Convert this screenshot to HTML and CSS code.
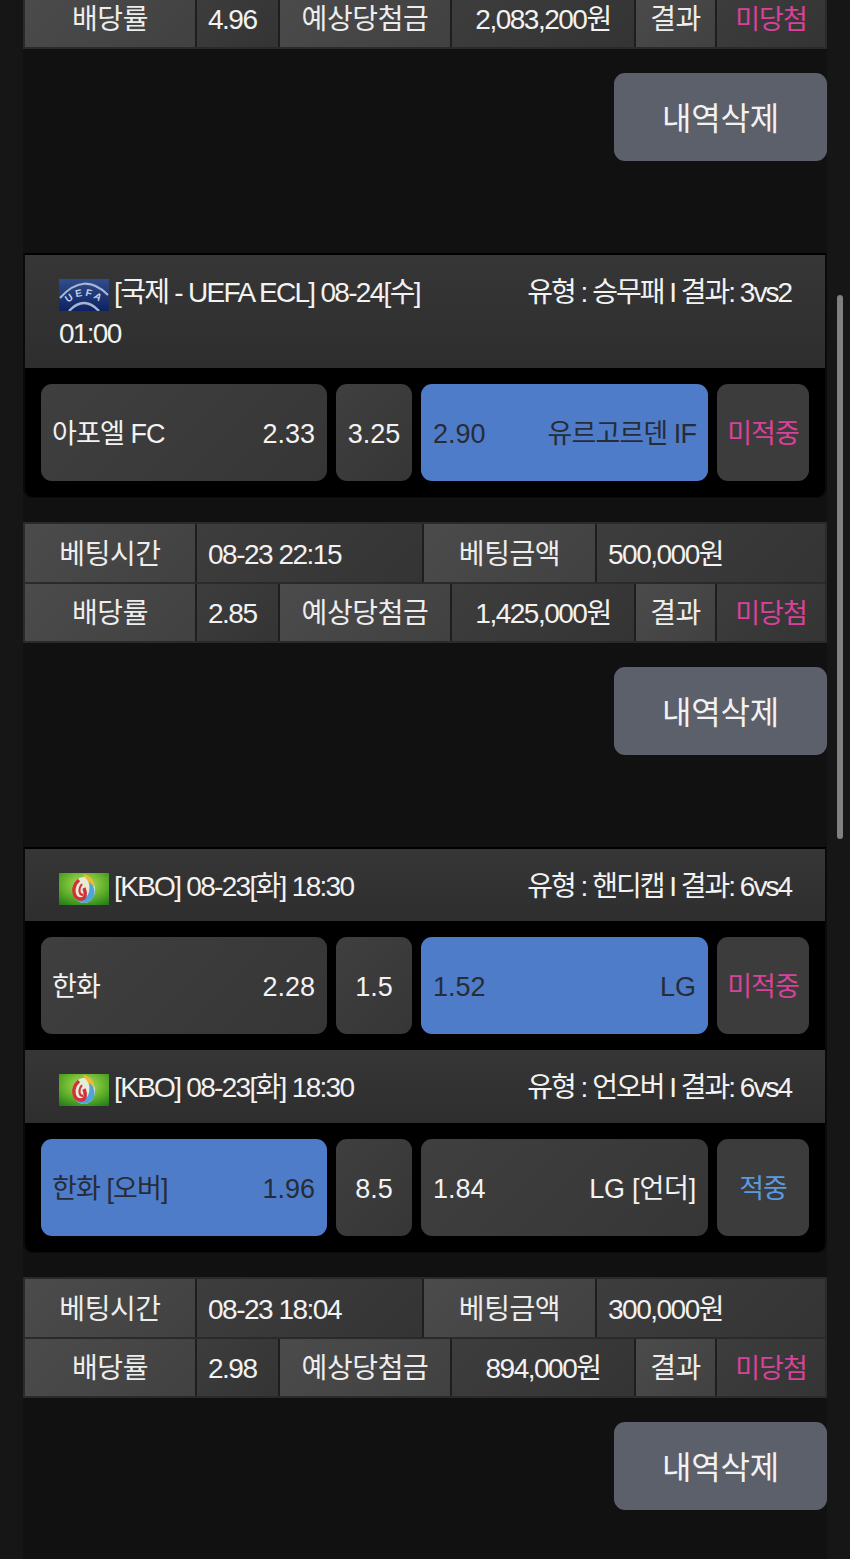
FILE: index.html
```html
<!DOCTYPE html>
<html lang="ko">
<head>
<meta charset="utf-8">
<title>베팅내역</title>
<link rel="stylesheet" href="styles.css">
</head>
<body>
<div class="page">
  <div class="bet-table first">
    <div class="tr">
      <div class="td lab c170">배당률</div><div class="td val c80">4.96</div><div class="td lab c170">예상당첨금</div><div class="td val cen c182">2,083,200원</div><div class="td lab c79">결과</div><div class="td val cen pink fill">미당첨</div>
    </div>
  </div>
  <div class="actions"><button class="del">내역삭제</button></div>

  <section class="card">
    <header class="head tall">
      <div class="league">
        <svg class="flag" viewBox="0 0 50 32"><defs><linearGradient id="u" x1="0" y1="0" x2="0" y2="1"><stop offset="0" stop-color="#2f4d8c"/><stop offset="1" stop-color="#0e2263"/></linearGradient></defs><rect width="50" height="32" fill="url(#u)"/><path d="M1 19Q25-8 49 16" fill="none" stroke="#a9b6cf" stroke-width="2.2"/><path d="M10 32Q25 16 40 32" fill="none" stroke="#a9b6cf" stroke-width="2.4"/><path id="ua" d="M4 29Q25 5 47 29" fill="none"/><text class="uefa"><textPath href="#ua" startOffset="7">UEFA</textPath></text></svg>
        [국제 - UEFA ECL] 08-24[수] 01:00
      </div>
      <div class="type">유형 : 승무패 I 결과: 3vs2</div>
    </header>
    <div class="match">
      <div class="pick wide"><span class="name">아포엘 FC</span><span>2.33</span></div>
      <div class="pick mid">3.25</div>
      <div class="pick wide on"><span>2.90</span><span class="name">유르고르덴 IF</span></div>
      <div class="pick res pink">미적중</div>
    </div>
  </section>
  <div class="bet-table">
    <div class="tr">
      <div class="td lab c170">베팅시간</div><div class="td val c225">08-23 22:15</div><div class="td lab c170b">베팅금액</div><div class="td val c229">500,000원</div>
    </div>
    <div class="tr">
      <div class="td lab c170">배당률</div><div class="td val c80">2.85</div><div class="td lab c170">예상당첨금</div><div class="td val cen c182">1,425,000원</div><div class="td lab c79">결과</div><div class="td val cen pink fill">미당첨</div>
    </div>
  </div>
  <div class="actions"><button class="del">내역삭제</button></div>

  <section class="card">
    <header class="head">
      <div class="league">
        <svg class="flag" viewBox="0 0 50 32"><use href="#kbo"/></svg>
        [KBO] 08-23[화] 18:30
      </div>
      <div class="type">유형 : 핸디캡 I 결과: 6vs4</div>
    </header>
    <div class="match">
      <div class="pick wide"><span class="name">한화</span><span>2.28</span></div>
      <div class="pick mid">1.5</div>
      <div class="pick wide on"><span>1.52</span><span>LG</span></div>
      <div class="pick res pink">미적중</div>
    </div>
    <header class="head">
      <div class="league">
        <svg class="flag" viewBox="0 0 50 32"><defs><radialGradient id="k" cx=".5" cy=".35" r=".8"><stop offset="0" stop-color="#b8e45e"/><stop offset=".55" stop-color="#62b02c"/><stop offset="1" stop-color="#1f7a18"/></radialGradient></defs><g id="kbo"><rect width="50" height="32" fill="url(#k)"/><ellipse cx="25" cy="17" rx="11" ry="13" fill="#e6ecd6"/><path d="M24 1C31 2 36 7 35 14L30 11C29 7 26 5 24 1Z" fill="#edb93c"/><path d="M30 9C38 14 38 28 26 30C22 30 19 29 17 26C27 28 32 22 30 9Z" fill="#4fa5da"/><path d="M20 7C12 14 14 26 22 26C27 26 27 20 25 15" fill="none" stroke="#d5303a" stroke-width="3.4"/><path d="M23 11C19 16 20 22 24 22" fill="none" stroke="#d5303a" stroke-width="2"/></g></svg>
        [KBO] 08-23[화] 18:30
      </div>
      <div class="type">유형 : 언오버 I 결과: 6vs4</div>
    </header>
    <div class="match">
      <div class="pick wide on"><span class="name">한화 [오버]</span><span>1.96</span></div>
      <div class="pick mid">8.5</div>
      <div class="pick wide"><span>1.84</span><span class="name loose">LG [언더]</span></div>
      <div class="pick res blue">적중</div>
    </div>
  </section>
  <div class="bet-table">
    <div class="tr">
      <div class="td lab c170">베팅시간</div><div class="td val c225">08-23 18:04</div><div class="td lab c170b">베팅금액</div><div class="td val c229">300,000원</div>
    </div>
    <div class="tr">
      <div class="td lab c170">배당률</div><div class="td val c80">2.98</div><div class="td lab c170">예상당첨금</div><div class="td val cen c182">894,000원</div><div class="td lab c79">결과</div><div class="td val cen pink fill">미당첨</div>
    </div>
  </div>
  <div class="actions"><button class="del">내역삭제</button></div>
</div>
<div class="scrollbar"></div>
</body>
</html>
```
FILE: styles.css
```css
* { box-sizing: border-box; }
html, body { margin: 0; height: 1559px; overflow: hidden; }
body {
  background: #161616;
  color: #f2f2f2;
  font-family: "Liberation Sans", "Noto Sans CJK KR", sans-serif;
  font-size: 28px;
  font-weight: 400;
}
.page {
  width: 804px;
  margin: -11px 0 0 23px;
  background: #111;
  min-height: 1570px;
}
.bet-table {
  background: #2a2a2a;
  padding: 2px;
  display: flex;
  flex-direction: column;
  gap: 2px;
  height: 121px;
}
.bet-table.first { height: 60px; padding-top: 0; }
.tr { flex: 1; display: flex; gap: 2px; background: #1e1e1e; }
.td {
  display: flex;
  align-items: center;
  padding: 4px 0 0 11px;
  line-height: 32px;
  letter-spacing: -1.5px;
  white-space: nowrap;
}
.lab {
  justify-content: center;
  padding-left: 0;
  letter-spacing: -.4px;
  background: linear-gradient(135deg, #4b4b4b, #414141);
  color: #ededed;
}
.val { background: linear-gradient(135deg, #3d3d3d, #343434); }
.cen { justify-content: center; padding-left: 0; }
.c170 { width: 170px; }
.c170b { width: 171px; }
.c225 { width: 225px; }
.c229 { flex: 1; }
.c80 { width: 81px; }
.c182 { width: 182px; }
.c79 { width: 79px; }
.fill { flex: 1; font-size: 27px; letter-spacing: -1px; }
.pink { color: #d8429a; }
.blue { color: #5a9be0; }
.actions { display: flex; justify-content: flex-end; padding: 24px 0 92px; }
.del {
  width: 213px;
  height: 88px;
  border: 0;
  border-radius: 11px;
  background: #5c606a;
  color: #f2f2f2;
  font: inherit;
  font-size: 32px;
  letter-spacing: -.2px;
  padding: 0 0 3px;
}
.card {
  background: #000;
  border: 2px solid #0a0a0a;
  border-top-color: #000;
  border-bottom-width: 1px;
  border-radius: 0 0 10px 10px;
  margin-bottom: 24px;
}
.head {
  display: flex;
  justify-content: space-between;
  background: linear-gradient(#363636, #2e2e2e);
  padding: 17px 34px 0 34px;
  line-height: 41px;
  height: 72px;
}
.match + .head { height: 73px; }
.head.tall { height: 113px; }
.league { width: 400px; letter-spacing: -1.7px; }
.type { letter-spacing: -2px; white-space: nowrap; }
.flag { width: 50px; height: 32px; vertical-align: -9px; margin: -9px -1px 0 0; }
.uefa { font: 700 10px "Liberation Sans", sans-serif; fill: #c4cfe2; letter-spacing: 2.5px; }
.match { display: flex; gap: 9px; padding: 16px; height: 129px; }
.pick {
  display: flex;
  align-items: center;
  justify-content: center;
  border-radius: 11px;
  background: linear-gradient(135deg, #3f3f3f, #363636);
  font-size: 27px;
  line-height: 32px;
  padding-top: 2px;
}
.name { letter-spacing: -.9px; }
.name.loose { letter-spacing: -.2px; }
.wide { width: 286px; justify-content: space-between; padding: 2px 12px 0 11px; }
.wide + .mid + .wide { width: 287px; padding-left: 12px; }
.mid { width: 76px; }
.res { width: 92px; background: #3c3c3c; letter-spacing: -1px; }
.on { background: #4f7cc9; color: #262c38; }
.scrollbar {
  position: absolute;
  left: 837px;
  top: 295px;
  width: 6px;
  height: 544px;
  border-radius: 3px;
  background: #808080;
}
```
